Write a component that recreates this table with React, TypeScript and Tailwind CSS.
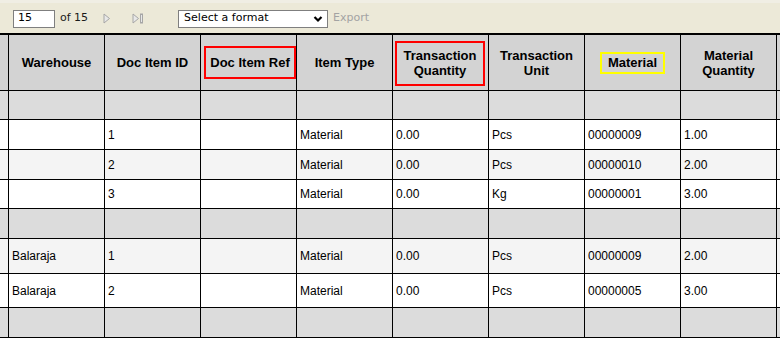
import React from "react";

type Row = {
  wh: string;
  id: string;
  type: string;
  qty: string;
  unit: string;
  mat: string;
  mqty: string;
  bg: string;
  h: string;
};

const rowsA: Row[] = [
  { wh: "", id: "1", type: "Material", qty: "0.00", unit: "Pcs", mat: "00000009", mqty: "1.00", bg: "bg-white", h: "h-[30px]" },
  { wh: "", id: "2", type: "Material", qty: "0.00", unit: "Pcs", mat: "00000010", mqty: "2.00", bg: "bg-[#f4f4f4]", h: "h-[30px]" },
  { wh: "", id: "3", type: "Material", qty: "0.00", unit: "Kg", mat: "00000001", mqty: "3.00", bg: "bg-white", h: "h-[29px]" },
];

const rowsB: Row[] = [
  { wh: "Balaraja", id: "1", type: "Material", qty: "0.00", unit: "Pcs", mat: "00000009", mqty: "2.00", bg: "bg-[#f4f4f4]", h: "h-[35px]" },
  { wh: "Balaraja", id: "2", type: "Material", qty: "0.00", unit: "Pcs", mat: "00000005", mqty: "3.00", bg: "bg-white", h: "h-[34px]" },
];

function Cell({ children, className = "" }: { children?: React.ReactNode; className?: string }) {
  return (
    <div className={`w-[96px] shrink-0 border-r border-black flex items-center pl-[3px] ${className}`}>
      {children}
    </div>
  );
}

function DataRow({ r }: { r: Row }) {
  return (
    <div className={`flex border-b border-black text-[12px] text-black ${r.bg} ${r.h}`}>
      <div className="w-[9px] shrink-0 border-r border-black" />
      <Cell>{r.wh}</Cell>
      <Cell>{r.id}</Cell>
      <Cell />
      <Cell>{r.type}</Cell>
      <Cell>{r.qty}</Cell>
      <Cell>{r.unit}</Cell>
      <Cell>{r.mat}</Cell>
      <Cell>{r.mqty}</Cell>
      <div className="flex-1" />
    </div>
  );
}

function GroupRow({ h }: { h: string }) {
  return (
    <div className={`flex border-b border-black bg-[#dcdcdc] ${h}`}>
      <div className="w-[9px] shrink-0 border-r border-black" />
      {Array.from({ length: 8 }).map((_, i) => (
        <div key={i} className="w-[96px] shrink-0 border-r border-black" />
      ))}
      <div className="flex-1" />
    </div>
  );
}

function Head({ children, className = "" }: { children?: React.ReactNode; className?: string }) {
  return (
    <div className={`w-[96px] shrink-0 border-r border-black flex items-center justify-center text-center ${className}`}>
      {children}
    </div>
  );
}

export default function App() {
  return (
    <div className="w-[780px] h-[338px] overflow-hidden bg-white" style={{ fontFamily: '"Liberation Sans", Arial, sans-serif' }}>
      {/* report viewer toolbar */}
      <div className="h-[33px] bg-[#ece9d8] border-t-[3px] border-[#f0eee4] flex items-center text-[11px]" style={{ fontFamily: '"DejaVu Sans", Verdana, sans-serif' }}>
        <div className="ml-[13px] mt-[1px] w-[42px] h-[18px] border border-[#7f7f7f] bg-white flex items-center pl-[4px] text-black">15</div>
        <span className="ml-[5px] text-[#1a1a1a]">of 15</span>
        <svg className="ml-[15px]" width="8" height="11" viewBox="0 0 8 11">
          <path d="M1 1 L6.5 5.5 L1 10 Z" fill="#e8e8e8" stroke="#a6a6a6" strokeWidth="1" />
        </svg>
        <svg className="ml-[21px]" width="12" height="11" viewBox="0 0 12 11">
          <path d="M1 1 L6.5 5.5 L1 10 Z" fill="#e8e8e8" stroke="#a6a6a6" strokeWidth="1" />
          <rect x="8.5" y="1" width="2" height="9" fill="#e8e8e8" stroke="#a6a6a6" strokeWidth="1" />
        </svg>
        <div className="ml-[34px] mt-[1px] w-[150px] h-[18px] border border-[#7f7f7f] bg-white flex items-center justify-between pl-[5px] pr-[4px] text-black">
          <span>Select a format</span>
          <svg width="10" height="8" viewBox="0 0 10 8">
            <path d="M1.5 2 L5 5.5 L8.5 2" fill="none" stroke="#000" strokeWidth="2.2" />
          </svg>
        </div>
        <span className="ml-[5px] text-[#a3a3a3]">Export</span>
      </div>

      {/* report table */}
      <div className="border-t-2 border-black">
        <div className="flex h-[56px] border-b border-black bg-[#d3d3d3] text-[13px] font-bold text-black leading-[15px]">
          <div className="w-[9px] shrink-0 border-r border-black" />
          <Head>Warehouse</Head>
          <Head>Doc Item ID</Head>
          <Head className="justify-start pl-[3px]">
            <span className="w-[92px] h-[33px] border-2 border-[#ff0000] flex items-center justify-center">Doc Item Ref</span>
          </Head>
          <Head>Item Type</Head>
          <Head className="justify-start pl-[2px] pt-[1px]">
            <span className="w-[90px] h-[45px] border-2 border-[#ff0000] flex items-center justify-center">
              Transaction
              <br />
              Quantity
            </span>
          </Head>
          <Head>
            Transaction
            <br />
            Unit
          </Head>
          <Head>
            <span className="w-[65px] h-[22px] border-2 border-[#ffff00] flex items-center justify-center">Material</span>
          </Head>
          <Head>
            Material
            <br />
            Quantity
          </Head>
          <div className="flex-1" />
        </div>
        <GroupRow h="h-[29px]" />
        {rowsA.map((r, i) => (
          <DataRow key={i} r={r} />
        ))}
        <GroupRow h="h-[30px]" />
        {rowsB.map((r, i) => (
          <DataRow key={i} r={r} />
        ))}
        <GroupRow h="h-[30px]" />
      </div>
    </div>
  );
}
